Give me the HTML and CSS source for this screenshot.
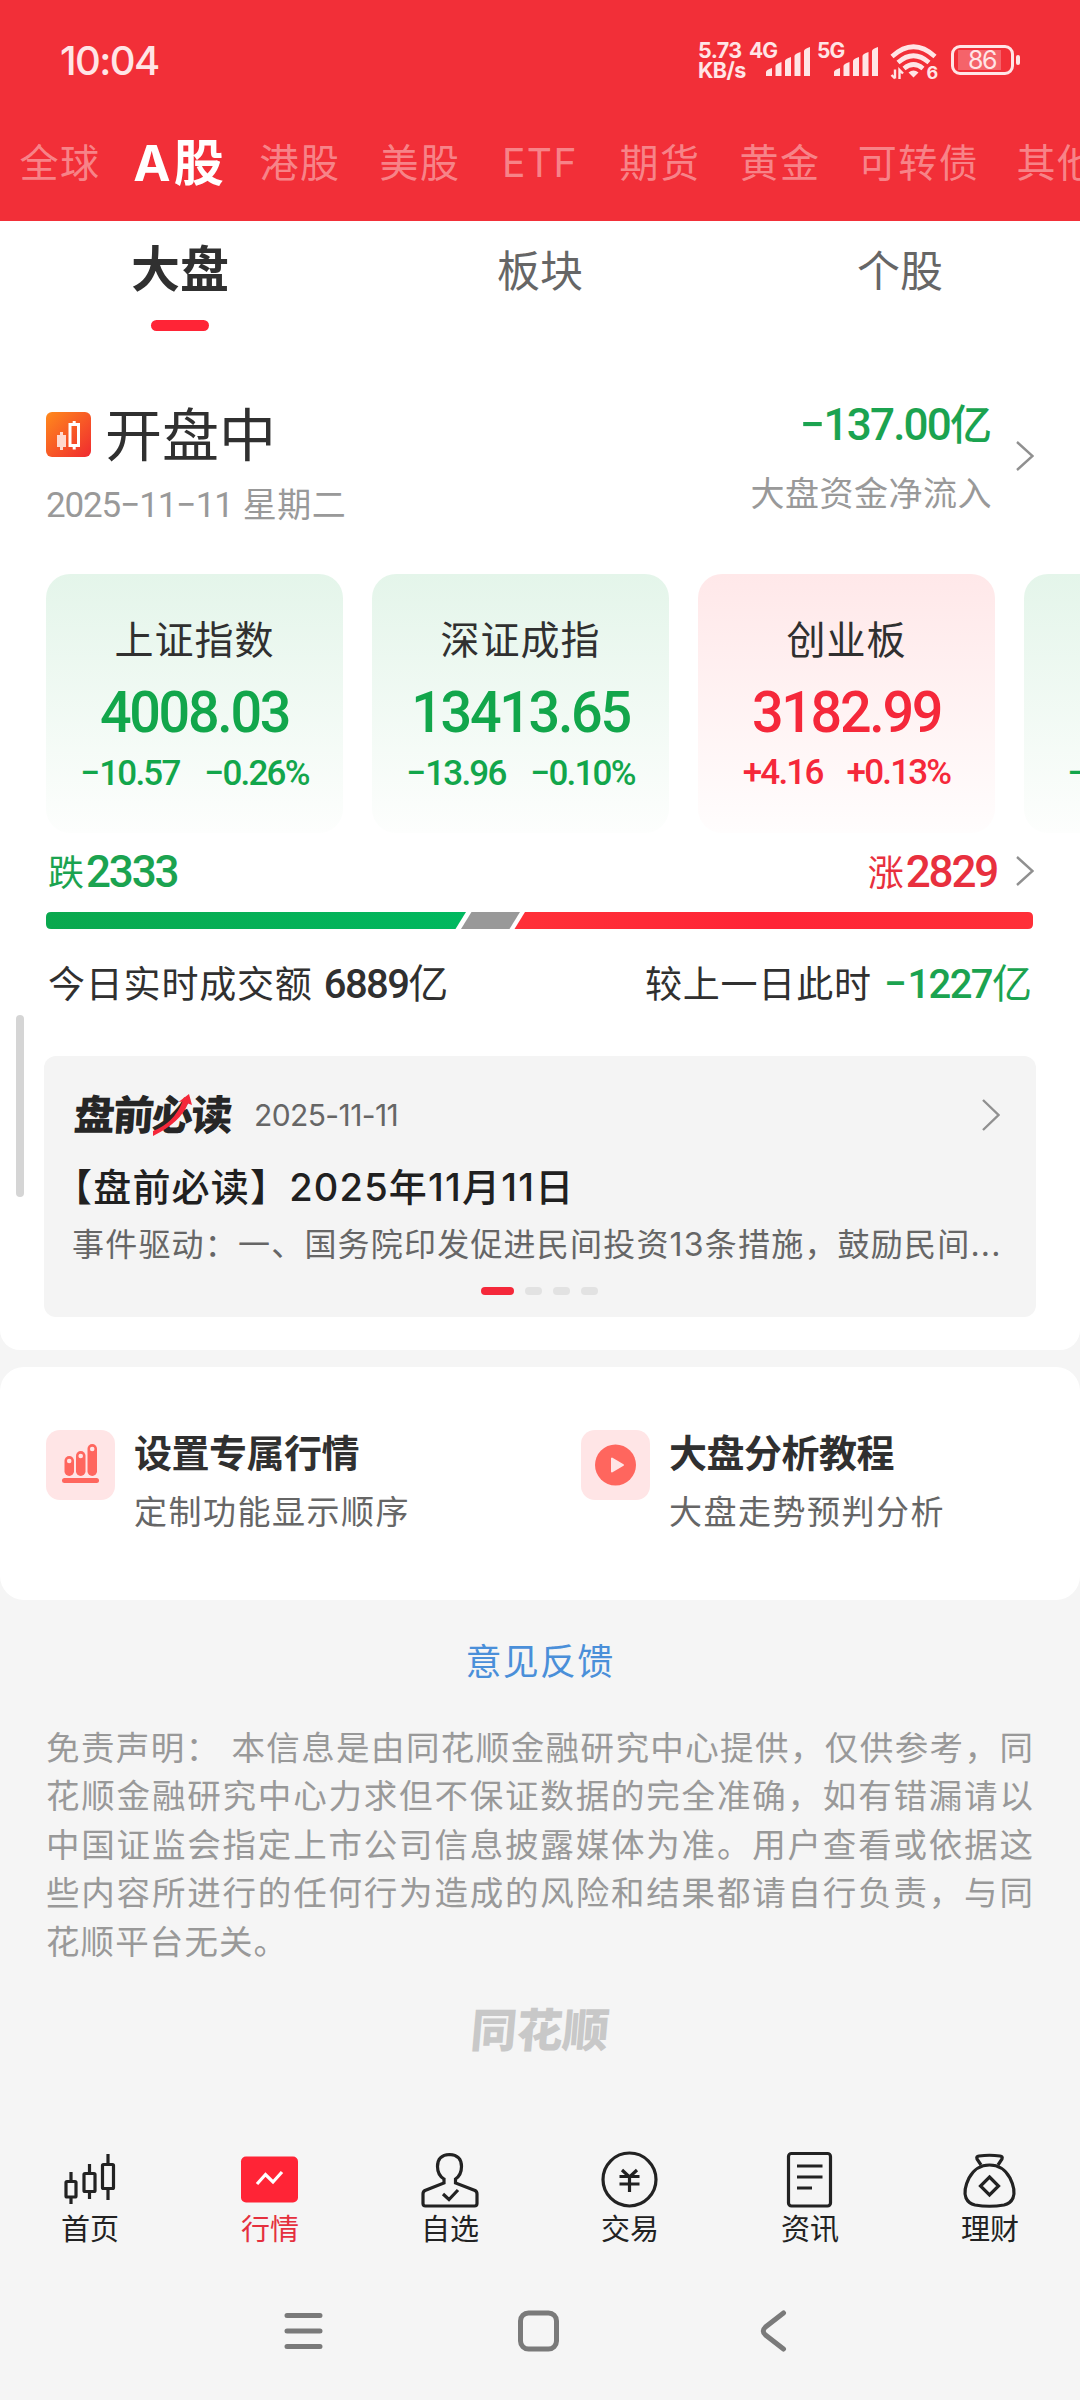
FILE: index.html
```html
<!DOCTYPE HTML>
<html lang="zh-CN">
<head>
    <meta charset="utf-8">
    <title>行情</title>
    <meta name="viewport" content="width=device-width,initial-scale=1"/>
    <link rel="stylesheet" href="styles.css">
</head>

<body>
    <div class="header">
        <!--系统状态栏-->
        <div class="status">
            <span class="clock">10:04</span>
            <div class="status-icons">
                <p class="speed">5.73<br>KB/s</p>
                <div class="signal">
                    <span>4G</span>
                    <svg width="44" height="30" viewBox="0 0 44 30"><path d="M0 29v-4q0-2 6-4v8zM9.500 29V19q0-2 6-4v14zM19 29V14q0-2 6-4v19zM28.500 29V9q0-2 6-4v24zM38 29V4q0-2 6-4v29z"/></svg>
                </div>
                <div class="signal">
                    <span>5G</span>
                    <svg width="44" height="30" viewBox="0 0 44 30"><path d="M0 29v-4q0-2 6-4v8zM9.500 29V19q0-2 6-4v14zM19 29V14q0-2 6-4v19zM28.500 29V9q0-2 6-4v24zM38 29V4q0-2 6-4v29z"/></svg>
                </div>
                <svg class="wifi" width="48" height="36" viewBox="0 0 48 36">
                    <g fill="none" stroke="#ffe5e6" stroke-width="4.600">
                        <path d="M2 12.500Q23.500-7 45 12.500"/>
                        <path d="M8 18.500Q23.500 5 39 18.500"/>
                        <path d="M14 24.500Q23.500 16.500 33 24.500"/>
                    </g>
                    <path d="M18.500 28.500q5-4 10 0l-5 5z"/>
                    <path d="M5 25.500v9M1.500 31l3.500 3.500M9.500 35v-9l3.500 3.500" fill="none" stroke="#ffe5e6" stroke-width="2.400"/>
                    <text x="36.500" y="34.500">6</text>
                </svg>
                <div class="battery"><span>86</span></div>
            </div>
        </div>
        <div class="markets">
            <a>全球</a>
            <a class="on">A股</a>
            <a>港股</a>
            <a>美股</a>
            <a>ETF</a>
            <a>期货</a>
            <a>黄金</a>
            <a class="wide">可转债</a>
            <a>其他</a>
        </div>
    </div>

    <div class="panel main">
        <div class="subtabs">
            <a class="on">大盘</a>
            <a>板块</a>
            <a>个股</a>
        </div>

        <div class="summary">
            <div class="summary-left">
                <h1>
                    <svg width="45" height="45" viewBox="0 0 45 45">
                        <defs><linearGradient id="logoBg" x1="0" y1="0" x2="1" y2="1"><stop offset="0" stop-color="#ff8a1c"/><stop offset="1" stop-color="#f02a30"/></linearGradient></defs>
                        <rect width="45" height="45" rx="6" fill="url(#logoBg)"/>
                        <path d="M11 23h9v12h-9zM14 20h3v18h-3z" fill="#ffd9cf"/>
                        <path d="M24 12.500h8.500v21H24zM28.200 9v3M28.200 34v3.500" fill="none" stroke="#fff" stroke-width="3"/>
                    </svg>
                    <span>开盘中</span>
                </h1>
                <p class="date"><span class="num">2025<i>-</i>11<i>-</i>11</span> 星期二</p>
            </div>
            <div class="summary-right">
                <p class="flow"><span class="num"><i>-</i>137.00</span>亿</p>
                <p class="flow-name">大盘资金净流入</p>
            </div>
            <svg class="arrow" width="18" height="30" viewBox="0 0 18 30"><path d="M1 1l15.500 14L1 29"/></svg>
        </div>

        <div class="cards">
            <div class="card green">
                <h2>上证指数</h2>
                <p class="price num">4008.03</p>
                <p class="change num"><span><i>-</i>10.57</span><span><i>-</i>0.26%</span></p>
            </div>
            <div class="card green">
                <h2>深证成指</h2>
                <p class="price num">13413.65</p>
                <p class="change num"><span><i>-</i>13.96</span><span><i>-</i>0.10%</span></p>
            </div>
            <div class="card red">
                <h2>创业板</h2>
                <p class="price num">3182.99</p>
                <p class="change num"><span>+4.16</span><span>+0.13%</span></p>
            </div>
            <div class="card green next">
                <p class="change num"><i>-</i></p>
            </div>
        </div>

        <!--涨跌家数-->
        <div class="breadth">
            <p class="fall">跌<span class="num">2333</span></p>
            <p class="rise">涨<span class="num">2829</span></p>
            <svg class="arrow" width="18" height="30" viewBox="0 0 18 30"><path d="M1 1l15.500 14L1 29"/></svg>
        </div>
        <svg class="ratio" width="987" height="17" viewBox="0 0 987 17">
            <defs>
                <linearGradient id="fallBg"><stop offset="0" stop-color="#0aa84e"/><stop offset="1" stop-color="#00b85f"/></linearGradient>
                <linearGradient id="riseBg"><stop offset="0" stop-color="#ff3038"/><stop offset=".5" stop-color="#ff2436"/><stop offset="1" stop-color="#ff2f38"/></linearGradient>
            </defs>
            <path d="M5 0h415l-10.500 17H5q-5 0-5-5V5q0-5 5-5z" fill="url(#fallBg)"/>
            <path d="M425.500 0H474l-10.500 17H415z" fill="#999"/>
            <path d="M479 0h503q5 0 5 5v7q0 5-5 5H468.500z" fill="url(#riseBg)"/>
        </svg>
        <div class="turnover">
            <p>今日实时成交额 <b class="num">6889</b><em>亿</em></p>
            <p>较上一日此时 <span class="down"><b class="num"><i>-</i>1227</b><em>亿</em></span></p>
        </div>

        <div class="news">
            <div class="news-head">
                <div class="news-logo">盘前必读
                    <svg width="40" height="42" viewBox="0 0 40 42"><path d="M0 37Q21 29 29.500 7.500L25.500 8 36 0l3 11-4-1.500Q28 28 0 42z"/></svg>
                </div>
                <span class="news-date">2025-11-11</span>
                <svg class="arrow" width="18" height="32" viewBox="0 0 18 32"><path d="M1 1l15.500 15L1 31"/></svg>
            </div>
            <h3>【盘前必读】2025年11月11日</h3>
            <p class="news-desc">事件驱动：一、国务院印发促进民间投资13条措施，鼓励民间...</p>
            <div class="dots"><i class="on"></i><i></i><i></i><i></i></div>
        </div>
        <div class="scrollbar"></div>
    </div>

    <div class="panel tools">
        <div class="tool">
            <svg width="69" height="70" viewBox="0 0 69 70">
                <rect width="69" height="70" rx="14" fill="#ffe5e6"/>
                <g fill="#ff665e">
                    <rect x="18.500" y="26" width="9.500" height="20" rx="4.700"/>
                    <rect x="30" y="21" width="9.500" height="25" rx="4.700"/>
                    <rect x="41.500" y="14" width="9.500" height="32" rx="4.700"/>
                    <rect x="16" y="48" width="37" height="5" rx="2.500"/>
                </g>
                <g fill="#ffe5e6"><circle cx="23.200" cy="31" r="2.300"/><circle cx="34.700" cy="26" r="2.300"/><circle cx="46.200" cy="19" r="2.300"/></g>
            </svg>
            <div>
                <h4>设置专属行情</h4>
                <p>定制功能显示顺序</p>
            </div>
        </div>
        <div class="tool">
            <svg width="69" height="70" viewBox="0 0 69 70">
                <rect width="69" height="70" rx="14" fill="#ffe5e6"/>
                <circle cx="34.500" cy="35" r="20.500" fill="#ff665e"/>
                <path d="M31 28.500v13l11-6.500z" fill="#ffe5e6" stroke="#ffe5e6" stroke-width="2" stroke-linejoin="round"/>
            </svg>
            <div>
                <h4>大盘分析教程</h4>
                <p>大盘走势预判分析</p>
            </div>
        </div>
    </div>

    <a class="feedback">意见反馈</a>
    <p class="disclaimer">免责声明： 本信息是由同花顺金融研究中心提供，仅供参考，同花顺金融研究中心力求但不保证数据的完全准确，如有错漏请以中国证监会指定上市公司信息披露媒体为准。用户查看或依据这些内容所进行的任何行为造成的风险和结果都请自行负责，与同花顺平台无关。</p>
    <div class="brand">同花顺</div>

    <!--底部导航-->
    <div class="tabbar">
        <a>
            <svg width="60" height="64" viewBox="0 0 60 64">
                <rect x="6" y="33.500" width="10" height="15.500" rx="1"/><path d="M11 24v9M11 49v7"/>
                <rect x="24" y="25.500" width="11" height="18" rx="1"/><path d="M29.500 16v9M29.500 44v7"/>
                <rect x="42.500" y="16.500" width="11" height="24" rx="1"/><path d="M48 6v10M48 41v11"/>
            </svg>
            首页
        </a>
        <a class="on">
            <svg width="60" height="64" viewBox="0 0 60 64">
                <rect x="1" y="8.500" width="57" height="46" rx="5" fill="#ff2436" stroke="none"/>
                <path d="M17 36l8.500-9.500 7.500 7.500 9-10" stroke="#fff"/>
            </svg>
            行情
        </a>
        <a>
            <svg width="60" height="64" viewBox="0 0 60 64">
                <path d="M24 31v4L5 42.500q-2 1-2 3.500v9.500q0 2.500 2.500 2.500h49q2.500 0 2.500-2.500V46q0-2.500-2-3.500L35.500 35v-4q6-4 6-12.500 0-11.500-12-12-12 .5-12 12Q17.500 27 24 31z"/>
                <path d="M23 46l6 5.500L38 42"/>
            </svg>
            自选
        </a>
        <a>
            <svg width="60" height="64" viewBox="0 0 60 64">
                <circle cx="29.500" cy="31.500" r="26.500"/>
                <path d="M22 22l7.500 7 7.500-7M19.500 28.500h20M19.500 36h20M29.500 29v15"/>
            </svg>
            交易
        </a>
        <a>
            <svg width="60" height="64" viewBox="0 0 60 64">
                <rect x="8.500" y="5.500" width="42" height="52.500" rx="3"/>
                <path d="M17 18h25.500M17 29h25.500M17 40h15"/>
            </svg>
            资讯
        </a>
        <a>
            <svg width="60" height="64" viewBox="0 0 60 64">
                <path d="M21 17l-4-6q-1-2.500 2-3 10.500-1.500 21 0 3 .5 2 3l-4 6"/>
                <path d="M29.500 17Q43 17 50 30q6 12 3 20-2.500 5.500-9 7-14.500 2.500-29 0-6.500-1.500-9-7-3-8 3-20Q16 17 29.500 17z"/>
                <path d="M29.500 29l9 9-9 9-9-9z"/>
            </svg>
            理财
        </a>
    </div>
    <div class="sysnav">
        <svg width="40" height="42" viewBox="0 0 40 42"><path d="M3.500 5.500h33M3.500 21h33M3.500 36.500h33"/></svg>
        <svg width="42" height="42" viewBox="0 0 42 42"><rect x="3" y="3" width="36" height="36" rx="8"/></svg>
        <svg width="42" height="42" viewBox="0 0 42 42"><path d="M31 3L13 17q-4.500 4 0 8l18 14"/></svg>
    </div>
</body>
</html>
```
FILE: styles.css
```css
* {
    box-sizing: border-box;
}
html, body {
    margin: 0;
    padding: 0;
    background: #f5f5f5;
}
body {
    width: 1080px;
    height: 2400px;
    overflow: hidden;
    font-family: Inter, "Noto Sans CJK SC", sans-serif;
    color: #303030;
}
p, h1, h2, h3, h4 {
    margin: 0;
    font-weight: 400;
}
svg {
    display: block;
    flex: none;
}
em {
    font-style: normal;
}

/*数字*/
.num {
    font-family: Roboto, "Noto Sans CJK SC", sans-serif;
    font-weight: 500;
}
.num i {
    display: inline-block;
    margin: 0 0.07em 0 0.06em;
    font-family: Inter, sans-serif;
    font-style: normal;
    font-feature-settings: "case";
    transform: scaleX(1.3);
}
.arrow path {
    fill: none;
    stroke: #909090;
    stroke-width: 2.4;
}

/*顶部*/
.header {
    height: 221px;
    background: #f22f38;
    overflow: hidden;
}
.status {
    display: flex;
    justify-content: space-between;
    align-items: center;
    height: 120px;
    padding: 0 60px;
    color: #ffe5e6;
}
.clock {
    font-size: 40px;
    font-weight: 500;
    letter-spacing: -1.6px;
}
.status-icons {
    display: flex;
    align-items: center;
    height: 40px;
    fill: #ffe5e6;
}
.speed {
    width: 51px;
    font-size: 21.5px;
    font-weight: 700;
    line-height: 20px;
    letter-spacing: -0.6px;
}
.signal {
    display: flex;
    width: 68px;
    height: 36px;
}
.signal span {
    width: 17px;
    font-size: 21px;
    font-weight: 700;
    line-height: 18px;
    letter-spacing: -1px;
}
.signal svg {
    margin-top: 5px;
}
.wifi {
    margin: 3px 13px 0 5px;
}
.wifi text {
    font-size: 18px;
    font-weight: 700;
}
.battery {
    position: relative;
    width: 63px;
    height: 30px;
    border: 3px solid #ffe5e6;
    border-radius: 9px;
    margin-right: 6px;
    background: linear-gradient(rgba(255, 255, 255, 0.25), rgba(255, 255, 255, 0.25)) 4px 2px / 43px 20px no-repeat;
}
.battery span {
    display: block;
    padding-left: 14px;
    font-size: 25px;
    line-height: 25px;
    letter-spacing: -1.5px;
}
.battery:after {
    content: "";
    position: absolute;
    left: 62px;
    top: 7px;
    width: 4px;
    height: 10px;
    border-radius: 2px;
    background: #ffe5e6;
}
.markets {
    display: flex;
    width: 1200px;
    line-height: 86px;
    font-size: 39px;
    letter-spacing: 1.5px;
    color: rgba(255, 255, 255, 0.42);
}
.markets a {
    width: 120px;
    text-align: center;
    white-space: nowrap;
}
.markets .wide {
    width: 157px;
}
.markets .on {
    font-size: 50px;
    font-weight: 700;
    letter-spacing: 3px;
    color: #fff;
}

.panel {
    background: #fff;
}
.main {
    position: relative;
    height: 1129px;
    border-radius: 0 0 20px 20px;
}
.subtabs {
    display: flex;
    height: 110px;
}
.subtabs a {
    flex: 1;
    line-height: 100px;
    font-size: 43px;
    text-align: center;
    color: #666;
}
.subtabs .on {
    font-size: 49px;
    font-weight: 700;
    line-height: 98px;
    color: #303030;
}
.subtabs .on:after {
    content: "";
    display: block;
    width: 58px;
    height: 11px;
    margin: 1px auto 0;
    border-radius: 6px;
    background: #ff2436;
}

/*大盘概况*/
.summary {
    display: flex;
    align-items: flex-start;
    height: 140px;
    margin-top: 65px;
    padding: 0 46px;
}
.summary h1 {
    display: flex;
    align-items: center;
    gap: 14px;
    height: 76px;
    font-size: 57px;
}
.summary h1 span {
    margin-top: -6px;
}
.date {
    font-size: 34px;
    line-height: 64px;
    letter-spacing: 0.5px;
    color: #999;
}
.date .num {
    font-weight: 400;
    font-size: 35px;
    letter-spacing: -1.2px;
}
.summary-right {
    margin-left: auto;
    text-align: right;
}
.flow {
    height: 57px;
    line-height: 57px;
    font-size: 42px;
    font-weight: 500;
    color: #1ba350;
}
.flow .num {
    font-size: 44px;
    letter-spacing: -1.8px;
}
.flow-name {
    font-size: 34px;
    line-height: 82px;
    letter-spacing: 0.5px;
    color: #999;
}
.summary .arrow {
    margin: 45px 0 0 24px;
}

/*指数卡片*/
.cards {
    display: flex;
    gap: 29px;
    margin-top: 38px;
    padding-left: 46px;
    overflow: hidden;
}
.card {
    flex: none;
    width: 297px;
    height: 259px;
    padding-top: 36px;
    border-radius: 24px;
    text-align: center;
}
.card.green {
    background: linear-gradient(#e4f5ea, #fdfefd);
    color: #12a64b;
}
.card.red {
    background: linear-gradient(#ffe8e9, #fffdfd);
    color: #f5283a;
}
.card h2 {
    font-size: 39px;
    line-height: 60px;
    letter-spacing: 1px;
    color: #303030;
}
.price {
    font-size: 58px;
    line-height: 85px;
    letter-spacing: -2.4px;
    transform: scaleX(0.96);
}
.change {
    display: flex;
    justify-content: center;
    gap: 24px;
    font-size: 35px;
    line-height: 35px;
    letter-spacing: -1.8px;
}
.next {
    padding: 181px 0 0 43px;
}
.next .change {
    justify-content: flex-start;
}

.breadth {
    display: flex;
    align-items: center;
    height: 76px;
    padding: 0 46px 0 48px;
}
.breadth p {
    display: flex;
    align-items: center;
    height: 72px;
    padding-bottom: 2px;
    font-size: 36px;
}
.breadth .num {
    font-size: 44px;
    letter-spacing: -2.2px;
    padding: 3px 0 0 2px;
}
.breadth .arrow {
    margin-left: 19px;
}
.fall {
    color: #1ba350;
}
.rise {
    margin-left: auto;
    color: #e8303e;
}
.ratio {
    margin: 3px 46px 0;
}
.turnover {
    display: flex;
    justify-content: space-between;
    height: 50px;
    margin-top: 29px;
    padding: 0 48px 0 48px;
    font-size: 37px;
    line-height: 51px;
    letter-spacing: 0.8px;
}
.turnover .num {
    font-size: 40px;
    letter-spacing: -1.6px;
}
.turnover .num i {
    margin: 0 0.12em 0 0.07em;
}
.turnover em {
    font-size: 40px;
    letter-spacing: 0;
}
.turnover .down {
    color: #1ba350;
}

/*盘前必读*/
.news {
    height: 261px;
    margin: 48px 44px 0;
    padding: 31px 36px 0 28px;
    border-radius: 12px;
    background: #f4f4f4;
}
.news-head {
    display: flex;
    align-items: center;
    height: 56px;
}
.news-logo {
    position: relative;
    width: 182px;
    height: 42px;
    padding-left: 2px;
    font-size: 41px;
    line-height: 42px;
    font-weight: 900;
    letter-spacing: -1.8px;
    color: #262626;
    transform: skewX(-4deg);
}
.news-logo svg {
    position: absolute;
    left: 81px;
    top: 0;
    fill: #f5283a;
    transform: skewX(4deg);
}
.news-date {
    font-size: 30px;
    letter-spacing: -0.6px;
    color: #666;
}
.news-head .arrow {
    margin-left: auto;
}
.news h3 {
    margin: 18px 0 0 -18px;
    font-size: 38px;
    font-weight: 500;
    line-height: 52px;
    letter-spacing: 1.2px;
    color: #202020;
}
.news-desc {
    font-size: 32px;
    line-height: 64px;
    letter-spacing: 1.2px;
    white-space: nowrap;
    color: #666;
}
.dots {
    display: flex;
    gap: 11px;
    margin: 10px 0 0 409px;
}
.dots i {
    width: 17px;
    height: 8px;
    border-radius: 4px;
    background: #e2e2e2;
}
.dots .on {
    width: 33px;
    background: #f5283a;
}
.scrollbar {
    position: absolute;
    left: 16px;
    top: 794px;
    width: 8px;
    height: 182px;
    border-radius: 4px;
    background: #d5d5d5;
}

.tools {
    display: flex;
    height: 233px;
    margin-top: 17px;
    padding: 63px 0 0 46px;
    border-radius: 24px;
}
.tool {
    display: flex;
    flex: none;
    gap: 19px;
    width: 535px;
}
.tool h4 {
    font-size: 38px;
    font-weight: 700;
    line-height: 46px;
    letter-spacing: -0.5px;
}
.tool p {
    margin-top: 14px;
    font-size: 33px;
    line-height: 44px;
    letter-spacing: 1.5px;
    color: #666;
}

.feedback {
    display: block;
    height: 124px;
    line-height: 124px;
    font-size: 36px;
    letter-spacing: 1.3px;
    text-align: center;
    color: #4a8fd9;
}
.disclaimer {
    width: 988px;
    margin: 0 auto;
    font-size: 33.5px;
    line-height: 48.4px;
    letter-spacing: 1.1px;
    text-align: justify;
    color: #999;
}
.brand {
    margin-top: 32px;
    line-height: 64px;
    font-size: 46px;
    font-weight: 900;
    text-align: center;
    color: #c8c8c8;
    transform: skewX(-5deg);
}

/*底部*/
.tabbar {
    display: flex;
    margin-top: 86px;
}
.tabbar a {
    flex: 1;
    display: flex;
    flex-direction: column;
    align-items: center;
    font-size: 29px;
    line-height: 36px;
    color: #222;
}
.tabbar svg {
    fill: none;
    stroke: #222;
    stroke-width: 3.2;
}
.tabbar .on {
    color: #e5303e;
}
.sysnav {
    display: flex;
    margin: 43px 0 0 186px;
}
.sysnav svg {
    width: 235px;
    height: 42px;
    margin-top: 19px;
    fill: none;
    stroke: #7a7a7a;
    stroke-width: 5;
    stroke-linecap: round;
}
```
